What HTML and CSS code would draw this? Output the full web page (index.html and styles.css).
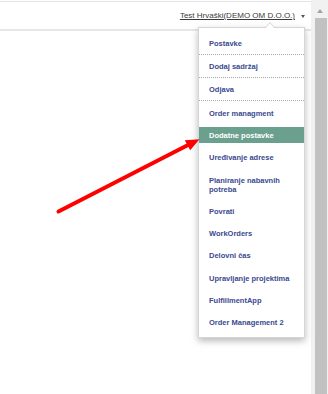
FILE: index.html
```html
<!DOCTYPE html>
<html>
<head>
<meta charset="utf-8">
<link rel="stylesheet" href="styles.css">
</head>
<body>
<div class="app">
  <div class="main">
    <header class="topbar">
      <a class="user" href="#">Test Hrvaški(DEMO OM D.O.O.)</a>
      <span class="caret"></span>
    </header>
    <ul class="dropdown">
      <li class="sep"><a href="#">Postavke</a></li>
      <li class="sep"><a href="#">Dodaj sadržaj</a></li>
      <li class="sep"><a href="#">Odjava</a></li>
      <li><a href="#">Order managment</a></li>
      <li><a class="active" href="#">Dodatne postavke</a></li>
      <li><a href="#">Uređivanje adrese</a></li>
      <li><a href="#">Planiranje nabavnih potreba</a></li>
      <li><a href="#">Povrati</a></li>
      <li><a href="#">WorkOrders</a></li>
      <li><a href="#">Delovni čas</a></li>
      <li><a href="#">Upravljanje projektima</a></li>
      <li><a href="#">FulfillmentApp</a></li>
      <li><a href="#">Order Management 2</a></li>
    </ul>
  </div>
  <div class="scrollbar">
    <span class="up"></span>
    <div class="thumb"></div>
  </div>
  <svg class="arrow" width="328" height="394" viewBox="0 0 328 394">
    <line x1="58.5" y1="211.5" x2="189" y2="144.5" stroke="#ff0000" stroke-width="4" stroke-linecap="round"/>
    <polygon points="199.5,139.3 190.2,150.2 184.8,140.2" fill="#ff0000"/>
  </svg>
</div>
</body>
</html>
```

FILE: styles.css
```css
html, body {
  margin: 0;
  padding: 0;
  background: #ffffff;
  overflow: hidden;
}

.app {
  position: relative;
  display: flex;
  width: 328px;
  height: 394px;
  font-family: "Liberation Sans", Arial, sans-serif;
}

.main {
  position: relative;
  flex: 1;
  padding-top: 1px;
}

.topbar {
  display: flex;
  align-items: center;
  justify-content: flex-end;
  height: 27px;
  border-top: 1px solid #e4e4ea;
  border-bottom: 2px solid #e6e6e6;
  padding-right: 6px;
  gap: 6px;
}

.user {
  font-size: 8px;
  color: #3a3a3a;
  text-decoration: underline;
  line-height: 10px;
  margin-top: 1px;
}

.caret {
  width: 0;
  height: 0;
  border-left: 2.5px solid transparent;
  border-right: 2.5px solid transparent;
  border-top: 3px solid #555555;
  margin-top: 1px;
}

.dropdown {
  position: absolute;
  top: 27px;
  right: 6px;
  width: 105px;
  margin: 0;
  padding: 3.5px 0;
  list-style: none;
  background: #ffffff;
  border: 1px solid #d6d6d6;
  box-shadow: 0 3px 7px rgba(0, 0, 0, 0.28);
  z-index: 2;
}

.dropdown::before,
.dropdown::after {
  content: "";
  position: absolute;
  width: 0;
  height: 0;
  border-left: 5px solid transparent;
  border-right: 5px solid transparent;
}

.dropdown::before {
  top: -6px;
  left: 66px;
  border-bottom: 6px solid #cfcfcf;
}

.dropdown::after {
  top: -5px;
  left: 66px;
  border-bottom: 6px solid #ffffff;
}

.dropdown li {
  padding: 2.9px 0;
}

.dropdown li.sep {
  border-bottom: 1px dotted #a8a8a8;
}

.dropdown a {
  display: block;
  padding: 4.5px 6px 3px 10px;
  font-size: 7.5px;
  font-weight: bold;
  line-height: 9px;
  color: #394a8f;
  text-decoration: none;
}

.dropdown a.active {
  background: #6b9f8e;
  color: #ffffff;
}

.scrollbar {
  width: 17px;
  flex: none;
  display: flex;
  flex-direction: column;
  align-items: center;
  background: #f1f1f1;
  padding-top: 9px;
  box-sizing: border-box;
}

.up {
  width: 0;
  height: 0;
  border-left: 3.5px solid transparent;
  border-right: 3.5px solid transparent;
  border-bottom: 4px solid #a3a3a3;
}

.thumb {
  margin-top: 5px;
  width: 12px;
  margin-left: 2px;
  flex: 1;
  background: #c1c1c1;
}

.arrow {
  position: absolute;
  top: 0;
  left: 0;
  pointer-events: none;
  z-index: 3;
}
```
